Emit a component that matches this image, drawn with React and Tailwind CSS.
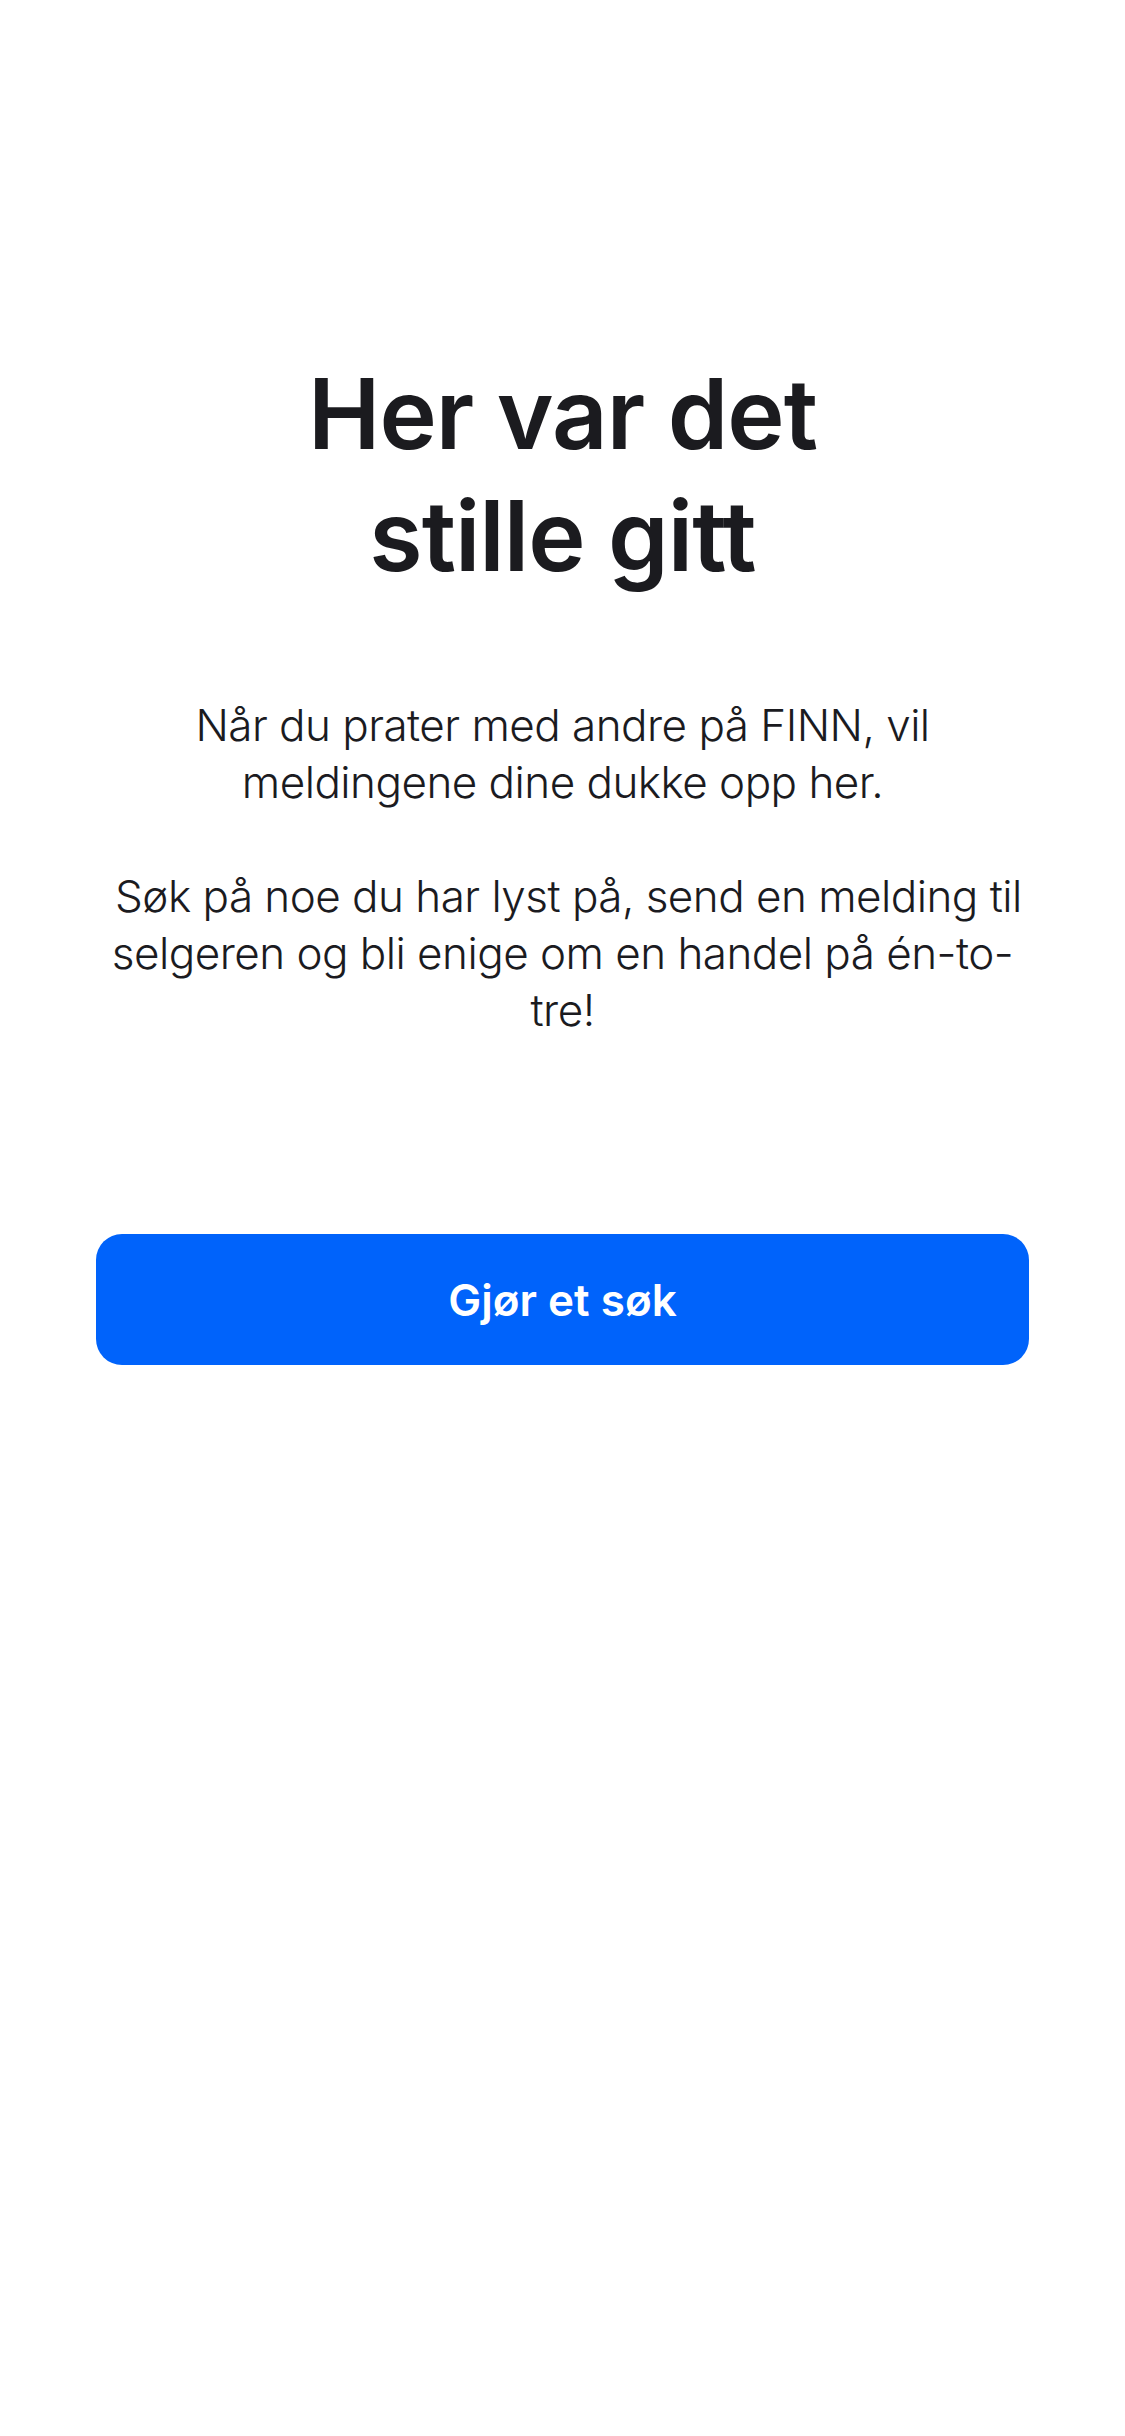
export default function App() {
  return (
    <div
      className="min-h-[2436px] w-full bg-white text-[#1b1b1f]"
      style={{ fontFamily: 'Inter, "Noto Sans", sans-serif' }}
    >
      <div className="flex flex-col items-center px-[96px] pt-[353px]">
        {/* Empty state heading */}
        <h1 className="text-center text-[97px] font-semibold leading-[122px] tracking-[-0.01em]">
          Her var det
          <br />
          stille gitt
        </h1>

        {/* Explanation */}
        <p className="-mx-[8px] mt-[100px] whitespace-pre-wrap text-center text-[44px] font-light leading-[57px] tracking-[-0.012em]">
          {'Når du prater med andre på FINN, vil meldingene dine dukke opp her.\n\n Søk på noe du har lyst på, send en melding til selgeren og bli enige om en handel på én-to-tre!'}
        </p>

        <button
          type="button"
          className="mt-[195px] flex h-[131px] w-full items-center justify-center rounded-[26px] bg-[#0063fb] text-[44px] font-semibold text-white"
        >
          Gjør et søk
        </button>
      </div>
    </div>
  );
}
